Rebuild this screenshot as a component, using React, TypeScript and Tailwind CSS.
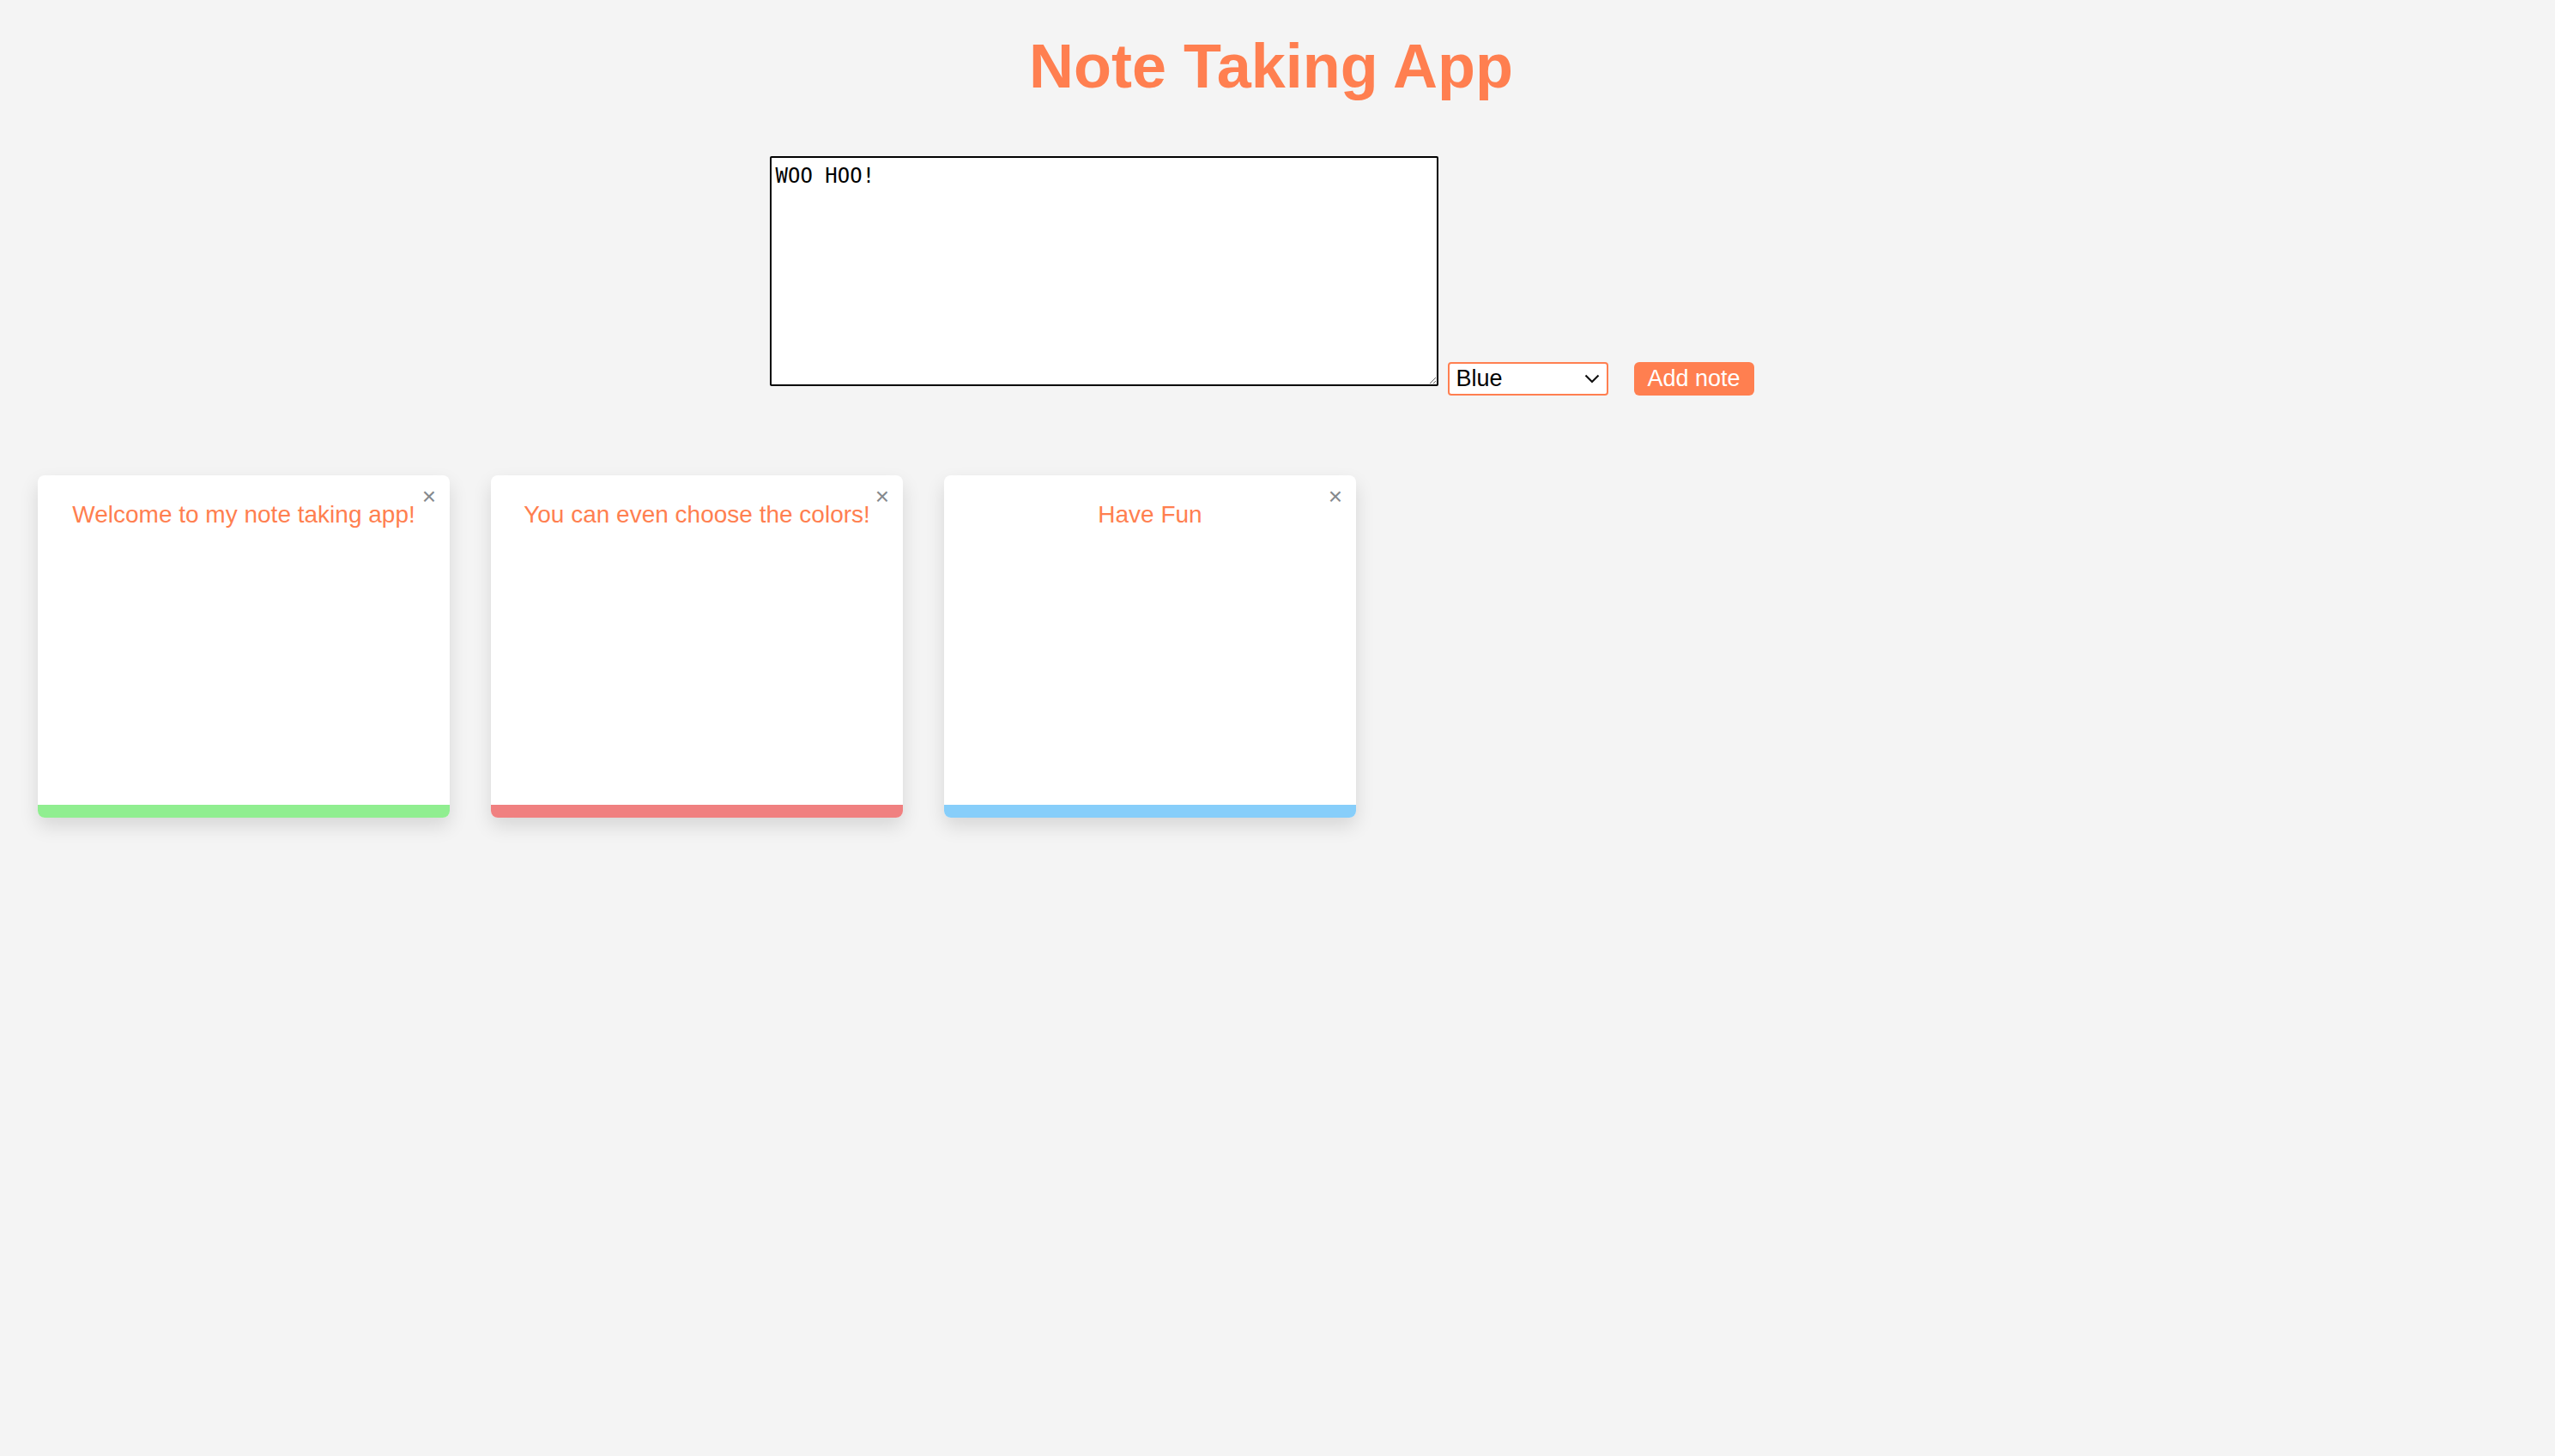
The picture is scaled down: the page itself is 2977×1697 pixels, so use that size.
import React from "react";

const notes = [
  { text: "Welcome to my note taking app!", bar: "bg-[#90ee90]" },
  { text: "You can even choose the colors!", bar: "bg-[#f08080]" },
  { text: "Have Fun", bar: "bg-[#87cefa]" },
];

export default function App() {
  return (
    <div className="min-h-screen w-full bg-[#f4f4f4] font-['Liberation_Sans',Arial,sans-serif] pr-[15px]">
      <h1 className="pt-[36px] text-center text-[72px] leading-[83px] font-bold text-[#ff7f50]">
        Note Taking App
      </h1>

      <div className="mt-[63px] flex items-end justify-center pr-[22px]">
        <textarea
          defaultValue="WOO HOO!"
          className="mb-[11px] h-[268px] w-[779px] resize-y rounded-[2px] border-2 border-black bg-white pt-[8px] pl-[5px] font-['DejaVu_Sans_Mono',monospace] text-[24px] leading-[27px] text-black outline-none"
        />
        <div className="relative ml-[11px] h-[39px] w-[187px]">
          <select
            defaultValue="Blue"
            className="h-full w-full appearance-none rounded-[4px] border-2 border-[#ff7f50] bg-white pl-[8px] text-[27px] leading-[33px] text-black outline-none"
          >
            <option>Green</option>
            <option>Red</option>
            <option>Blue</option>
          </select>
          <svg
            className="pointer-events-none absolute right-[10px] top-[14px]"
            width="18"
            height="11"
            viewBox="0 0 18 11"
            fill="none"
          >
            <path d="M1.5 1.5 L9 9 L16.5 1.5" stroke="#111" strokeWidth="2.2" />
          </svg>
        </div>
        <button className="ml-[30px] h-[39px] w-[140px] rounded-[6px] bg-[#ff7f50] text-[27px] leading-[39px] text-white">
          Add note
        </button>
      </div>

      <div className="mt-[93px] flex flex-wrap gap-[48px] pl-[44px]">
        {notes.map((n) => (
          <div
            key={n.text}
            className="relative flex h-[399px] w-[480px] flex-col rounded-[8px] bg-white shadow-[0_10px_22px_rgba(0,0,0,0.12)]"
          >
            <span className="absolute right-[16px] top-[9px] text-[28px] leading-[32px] text-[#85898d]">
              ×
            </span>
            <p className="flex-1 px-[20px] pt-[30px] text-center text-[28px] leading-[32px] text-[#ff7f50]">
              {n.text}
            </p>
            <div className={`h-[15px] w-full rounded-b-[8px] ${n.bar}`} />
          </div>
        ))}
      </div>
    </div>
  );
}
